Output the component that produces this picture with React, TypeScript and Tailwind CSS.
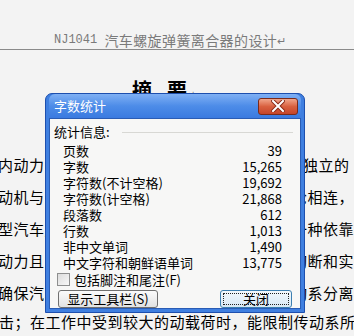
import React from "react";

const cjk = { fontFamily: '"Noto Sans CJK SC", "Noto Sans", sans-serif' };

const bodyRows = [
  { left: "内动力的传递与切断，是汽车传动系中", right: "独立的" },
  { left: "动机与变速器之间，主动部分与发动机飞", right: "轮相连，" },
  { left: "型汽车用离合器大多是摩擦式离合器，是", right: "一种依靠" },
  { left: "动力且能在必要时将发动机与传动系迅速", right: "切断和实" },
  { left: "确保汽车平稳起步；在换挡时使发动机与传", right: "动系分离" },
];

const stats = [
  ["页数", "39"],
  ["字数", "15,265"],
  ["字符数(不计空格)", "19,692"],
  ["字符数(计空格)", "21,868"],
  ["段落数", "612"],
  ["行数", "1,013"],
  ["非中文单词", "1,490"],
  ["中文字符和朝鲜语单词", "13,775"],
];

function CloseGlyph() {
  return (
    <svg width="14" height="12" viewBox="0 0 14 12">
      <path d="M2 1 L12 11 M12 1 L2 11" stroke="#8a2a18" strokeWidth="4" strokeLinecap="square" />
      <path d="M2 1 L12 11 M12 1 L2 11" stroke="#ffffff" strokeWidth="2" strokeLinecap="square" />
    </svg>
  );
}

function WordCountDialog() {
  return (
    <div className="absolute left-[45px] top-[93px] flex h-[220px] w-[260px] flex-col rounded-t-[7px] border border-[#1d4fae] bg-[#3f7fe0] px-[3px] pb-[3px]">
      <div className="flex h-[26px] items-center rounded-t-[6px] bg-gradient-to-b from-[#7fb0f4] via-[#4d8ce8] to-[#3a7ae0] pl-[5px] pr-[3px]">
        <span className="text-[13px] text-white" style={cjk}>
          字数统计
        </span>
        <div className="ml-auto flex h-[17px] w-[40px] items-center justify-center rounded-[3px] border border-[#7a2a1a] bg-gradient-to-b from-[#f0a58a] via-[#d9603f] to-[#c4452a]">
          <CloseGlyph />
        </div>
      </div>
      <div className="flex flex-1 flex-col border border-[#2a5cb4] bg-[#f7f7f6] px-[4px] pt-[5px]" style={cjk}>
        <div className="flex h-[16px] items-center">
          <span className="text-[13px] leading-[16px] text-black">统计信息:</span>
          <div className="ml-[12px] mr-[3px] h-px flex-1 bg-[#d8d8d4]" />
        </div>
        <div className="mt-[3px] flex flex-col pl-[9px] pr-[14px]">
          {stats.map(([label, value]) => (
            <div key={label} className="flex h-[16px] items-center justify-between text-[13px] leading-[16px] text-black">
              <span>{label}</span>
              <span>{value}</span>
            </div>
          ))}
        </div>
        <div className="mt-[2px] flex h-[13px] items-center pl-[3px]">
          <div className="h-[13px] w-[13px] border border-[#8e8f8f] bg-gradient-to-br from-[#dcdcdc] to-[#f8f8f8]" />
          <span className="ml-[4px] text-[13px] leading-[16px] text-black">包括脚注和尾注(F)</span>
        </div>
        <div className="mt-[4px] flex items-center pl-[4px] pr-[4px]">
          <div className="flex h-[18px] w-[100px] items-center justify-center rounded-[3px] border border-[#707070] bg-gradient-to-b from-[#fbfbfb] to-[#e2e2e2] text-[13px] leading-[16px] text-black">
            显示工具栏(S)
          </div>
          <div className="ml-auto flex h-[18px] w-[72px] items-center justify-center rounded-[3px] border border-[#3c7fb1] bg-gradient-to-b from-[#f2f8fc] to-[#d8e8f4] p-[2px]">
            <div className="flex h-full w-full items-center justify-center border border-dotted border-[#222] text-[13px] leading-[12px] text-black">
              关闭
            </div>
          </div>
        </div>
      </div>
    </div>
  );
}

export default function App() {
  return (
    <div className="relative h-[336px] w-[354px] overflow-hidden bg-[#f3f3f3]" style={cjk}>
      <div className="flex items-center pl-[54px] pt-[31px] h-[49px] leading-[18px] text-[#7a7a7a]">
        <span className="text-[12px]" style={{ fontFamily: '"Liberation Mono", monospace' }}>
          NJ1041&nbsp;
        </span>
        <span className="text-[14px] tracking-[0.4px]">汽车螺旋弹簧离合器的设计</span>
        <span className="text-[11px]">↵</span>
      </div>
      <div className="h-px bg-[#8a8a8a]" />
      <div className="mt-[28px] pl-[132px] text-[20px] font-bold leading-[24px] text-black">
        摘<span className="ml-[15px]">要</span>
        <span className="text-[10px] font-normal text-[#888]">↵</span>
      </div>
      <div className="mt-[43px] flex flex-col text-[15px] leading-[32px] tracking-[0.5px] text-black">
        {bodyRows.map((row) => (
          <div key={row.right} className="flex whitespace-nowrap">
            <span className="ml-[-2px] w-[305px] overflow-hidden">{row.left}</span>
            <span>{row.right}</span>
          </div>
        ))}
        <div className="ml-[-1px] mt-[-3px] whitespace-nowrap">击；在工作中受到较大的动载荷时，能限制传动系所</div>
      </div>
      <WordCountDialog />
    </div>
  );
}
